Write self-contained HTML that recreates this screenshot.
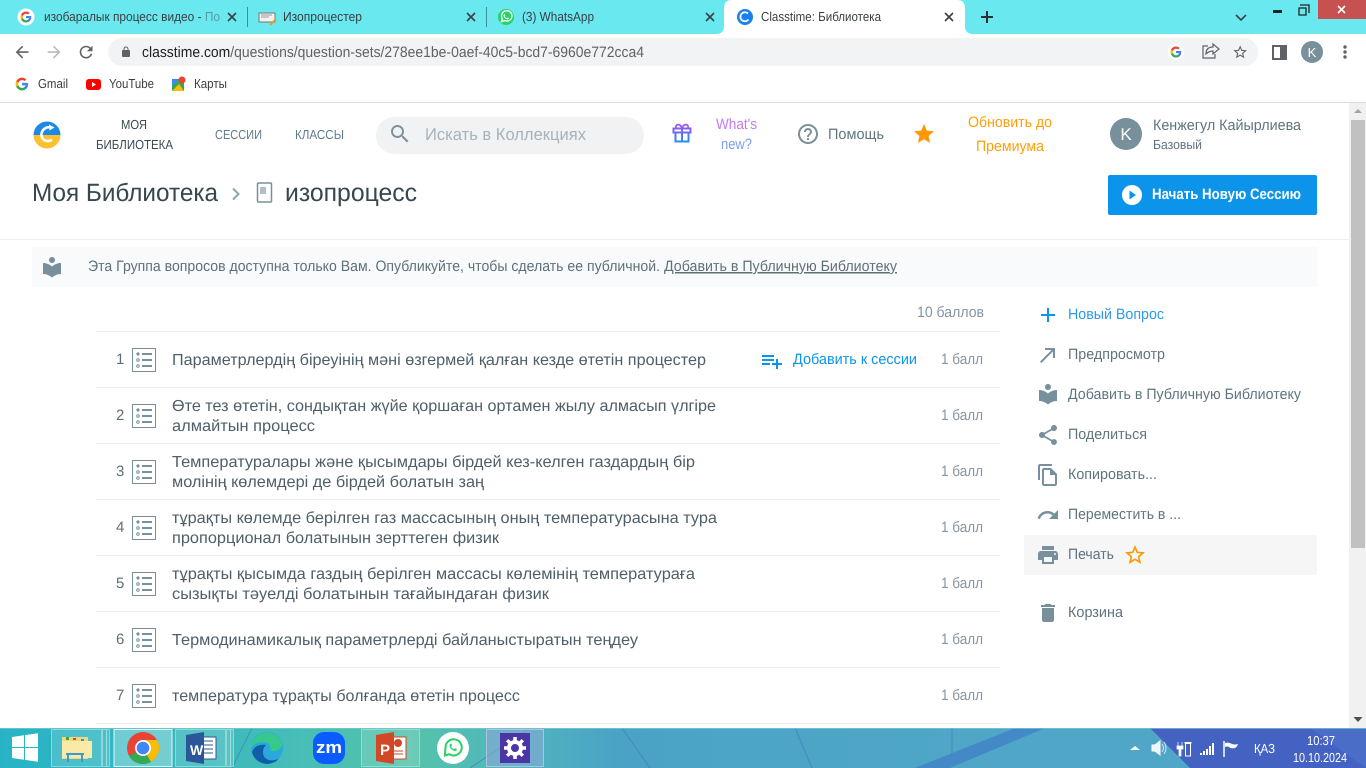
<!DOCTYPE html>
<html><head><meta charset="utf-8"><title>Classtime: Библиотека</title>
<style>
html,body{margin:0;padding:0;width:1366px;height:768px;overflow:hidden;background:#fff}
svg{display:block}
text{font-family:"Liberation Sans","DejaVu Sans","Noto Sans CJK SC",sans-serif;text-rendering:geometricPrecision}
.t{font-size:13px;fill:#3c4043}
.q{font-size:16px;fill:#4f5f69}
.n{font-size:15px;fill:#5f7079}
.p{font-size:15px;fill:#8494a0}
.s{font-size:15px;fill:#5f7480}
</style></head><body>
<svg width="1366" height="768" viewBox="0 0 1366 768" xmlns="http://www.w3.org/2000/svg">
<defs>
<linearGradient id="gift" gradientUnits="userSpaceOnUse" x1="0" y1="123" x2="0" y2="143"><stop offset="0" stop-color="#b04cf5"/><stop offset="1" stop-color="#1e90f5"/></linearGradient>
<linearGradient id="tb" x1="0" y1="0" x2="1" y2="0"><stop offset="0" stop-color="#27b3c6"/><stop offset=".2" stop-color="#43bcb9"/><stop offset=".3" stop-color="#55c3aa"/><stop offset=".38" stop-color="#50b5bd"/><stop offset=".45" stop-color="#4aa3c6"/><stop offset=".7" stop-color="#4fa6c6"/><stop offset="1" stop-color="#4fa6c6"/></linearGradient>
<symbol id="g" viewBox="0 0 24 24"><path fill="#4285F4" d="M22.56 12.25c0-.78-.07-1.53-.2-2.25H12v4.26h5.92c-.26 1.37-1.04 2.53-2.21 3.31v2.77h3.57c2.08-1.92 3.28-4.74 3.28-8.09z"/><path fill="#34A853" d="M12 23c2.97 0 5.46-.98 7.28-2.66l-3.57-2.77c-.98.66-2.23 1.06-3.71 1.06-2.86 0-5.29-1.93-6.16-4.53H2.18v2.84C3.99 20.53 7.7 23 12 23z"/><path fill="#FBBC05" d="M5.84 14.09c-.22-.66-.35-1.36-.35-2.09s.13-1.43.35-2.09V7.07H2.18C1.43 8.55 1 10.22 1 12s.43 3.45 1.18 4.93l2.85-2.22.81-.62z"/><path fill="#EA4335" d="M12 5.38c1.62 0 3.06.56 4.21 1.64l3.15-3.15C17.45 2.09 14.97 1 12 1 7.7 1 3.99 3.47 2.18 7.07l3.66 2.84c.87-2.6 3.3-4.53 6.16-4.53z"/></symbol>
<symbol id="lib" viewBox="0 0 24 24"><path d="M12 11.55C9.64 9.35 6.48 8 3 8v11c3.48 0 6.64 1.35 9 3.55 2.36-2.19 5.52-3.55 9-3.55V8c-3.48 0-6.64 1.35-9 3.55zM12 8c1.66 0 3-1.34 3-3s-1.34-3-3-3-3 1.34-3 3 1.34 3 3 3z"/></symbol>
<g id="qi" fill="none"><rect x=".5" y=".5" width="23" height="23" fill="#fff" stroke="#78909c"/><circle cx="6" cy="6" r="1.6" fill="#78909c"/><circle cx="6" cy="12" r="1.3" stroke="#78909c"/><circle cx="6" cy="18" r="1.3" stroke="#78909c"/><path d="M10 6h10M10 12h10M10 18h10" stroke="#78909c" stroke-width="2"/></g>
<g id="wa"><circle cx="0" cy="0" r="8" fill="#25d366"/><path d="M-4.6 4.7l.9-3.1a5.2 5.2 0 1 1 2 1.9z" fill="none" stroke="#fff" stroke-width="1.3"/><path d="M-2.2-2.4c.8-.9 1.2-.3 1.4.6.1.5-.7.8-.4 1.3.4.7 1 1.2 1.7 1.5.5.2.8-.7 1.3-.4.9.3 1.3.8.5 1.5-1.6 1.2-5.8-2.3-4.5-4.5z" fill="#fff"/></g>
</defs>

<!-- tab strip -->
<rect width="1366" height="34" fill="#6ae8ef"/>
<circle cx="26" cy="17" r="8.500" fill="#fff"/>
<use href="#g" x="20" y="11" width="12" height="12"/>
<text class="t" x="44" y="21" textLength="176" lengthAdjust="spacingAndGlyphs">изобаралык процесс видео - По</text>
<rect x="205" y="8" width="18" height="18" fill="#6ae8ef" opacity=".55"/>
<path d="M228 13l8 8M236 13l-8 8" stroke="#3c4043" stroke-width="1.6"/>
<rect x="247" y="7" width="1" height="20" fill="#3f8f96"/>
<g><rect x="259" y="13" width="16" height="9" fill="#f2f2f2" stroke="#777"/><path d="M261 15h11M261 17h8" stroke="#999"/><path d="M270 25l6-6" stroke="#d9a327" stroke-width="2"/></g>
<text class="t" x="283" y="21" textLength="79" lengthAdjust="spacingAndGlyphs">Изопроцестер</text>
<path d="M467 13l8 8M475 13l-8 8" stroke="#3c4043" stroke-width="1.6"/>
<rect x="486" y="7" width="1" height="20" fill="#3f8f96"/>
<use href="#wa" x="506" y="17"/>
<text class="t" x="522" y="21" textLength="72" lengthAdjust="spacingAndGlyphs">(3) WhatsApp</text>
<path d="M706 13l8 8M714 13l-8 8" stroke="#3c4043" stroke-width="1.6"/>
<path d="M716 34q8 0 8-8V8q0-8 8-8h225q8 0 8 8v18q0 8 8 8z" fill="#fff"/>
<circle cx="745" cy="17" r="8" fill="#1a7ff0"/>
<path d="M748 13.500a4.500 4.500 0 1 0 .5 6" fill="none" stroke="#fff" stroke-width="1.8"/>
<text class="t" x="761" y="21" textLength="120" lengthAdjust="spacingAndGlyphs">Classtime: Библиотека</text>
<path d="M945 13l8 8M953 13l-8 8" stroke="#3c4043" stroke-width="1.6"/>
<path d="M987 11v12M981 17h12" stroke="#2b2f33" stroke-width="2"/>
<path d="M1236 15l5 5 5-5" fill="none" stroke="#3c4043" stroke-width="1.6"/>
<rect x="1273" y="10" width="9" height="3" fill="#222"/>
<path d="M1300 5h9v8M1300 8h6v7h-7V8z" fill="none" stroke="#222" stroke-width="1.3"/>
<rect x="1318" width="48" height="19" fill="#c75050"/>
<path d="M1338 6l7 7M1345 6l-7 7" stroke="#fff" stroke-width="1.6"/>

<!-- toolbar -->
<g fill="#5f6368">
<path transform="translate(12.500 42.500) scale(.8)" d="M20 11H7.830l5.590-5.590L12 4l-8 8 8 8 1.410-1.410L7.830 13H20v-2z"/>
<path transform="translate(44.500 42.500) scale(.8)" fill="#b8bbbf" d="M4 11h12.170l-5.590-5.590L12 4l8 8-8 8-1.410-1.410L16.170 13H4v-2z"/>
<path transform="translate(76.500 42.500) scale(.8)" d="M17.650 6.350C16.200 4.900 14.210 4 12 4c-4.420 0-7.990 3.580-7.990 8s3.570 8 7.990 8c3.730 0 6.840-2.550 7.730-6h-2.080c-.82 2.330-3.040 4-5.650 4-3.310 0-6-2.690-6-6s2.690-6 6-6c1.660 0 3.140.69 4.220 1.780L13 11h7V4l-2.350 2.350z"/>
</g>
<rect x="108" y="38" width="1150" height="28" rx="14" fill="#f1f3f4"/>
<path transform="translate(120 46) scale(.5)" fill="#5f6368" d="M18 8h-1V6c0-2.760-2.240-5-5-5S7 3.240 7 6v2H6c-1.100 0-2 .9-2 2v10c0 1.100.9 2 2 2h12c1.100 0 2-.9 2-2V10c0-1.100-.9-2-2-2zM9 6c0-1.660 1.340-3 3-3s3 1.340 3 3v2H9V6z"/>
<text x="142" y="57" font-size="15" fill="#5f6368" textLength="502" lengthAdjust="spacingAndGlyphs"><tspan fill="#202124">classtime.com</tspan>/questions/question-sets/278ee1be-0aef-40c5-bcd7-6960e772cca4</text>
<circle cx="1176" cy="52" r="8" fill="#fff"/>
<use href="#g" x="1170" y="46" width="12" height="12"/>
<path d="M1207 46h-5v12h12v-4M1205 54c0-5 3-7 7-7v-3l6 5-6 5v-3c-3 0-5 1-7 3z" fill="none" stroke="#5f6368" stroke-width="1.2" transform="translate(1 0)"/>
<path transform="translate(1232 44) scale(.68)" fill="#5f6368" d="M22 9.240l-7.190-.62L12 2 9.190 8.630 2 9.240l5.460 4.730L5.820 21 12 17.270 18.180 21l-1.630-7.030L22 9.240zM12 15.400l-3.760 2.270 1-4.280-3.320-2.880 4.380-.38L12 6.100l1.710 4.040 4.380.38-3.320 2.880 1 4.280L12 15.400z"/>
<rect x="1273" y="46" width="13" height="13" fill="#fff" stroke="#5f6368" stroke-width="2"/>
<rect x="1280" y="46" width="6" height="13" fill="#5f6368"/>
<circle cx="1312" cy="52" r="11" fill="#78909c"/>
<text x="1312" y="57" font-size="13" fill="#fff" text-anchor="middle">K</text>
<g fill="#5f6368"><circle cx="1345" cy="47" r="1.7"/><circle cx="1345" cy="52" r="1.7"/><circle cx="1345" cy="57" r="1.7"/></g>

<!-- bookmarks -->
<use href="#g" x="15" y="77" width="14" height="14"/>
<text class="t" x="38" y="88" textLength="30" lengthAdjust="spacingAndGlyphs">Gmail</text>
<rect x="86" y="79" width="15" height="11" rx="3" fill="#f00"/><path d="M92 82l4 2.500-4 2.500z" fill="#fff"/>
<text class="t" x="109" y="88" textLength="45" lengthAdjust="spacingAndGlyphs">YouTube</text>
<g><path d="M172 79h12v12h-12z" fill="#34a853"/><path d="M172 91l7-7 5 7z" fill="#fbbc05"/><path d="M172 79h7l-7 7z" fill="#4285f4"/><circle cx="182" cy="80" r="3.500" fill="#ea4335"/></g>
<text class="t" x="194" y="88" textLength="33" lengthAdjust="spacingAndGlyphs">Карты</text>
<rect y="102" width="1366" height="1" fill="#dadce0"/>

<!-- app header -->
<path d="M33.500 135a13.500 13.500 0 0 1 27 0z" fill="#1e88e5"/>
<path d="M33.500 135a13.500 13.500 0 0 0 27 0z" fill="#fbc02d"/>
<path d="M51 127.500a7.500 7.500 0 0 0-9.500 6.500c-.5 5 4 8.500 9 6.500l1.500-1" fill="none" stroke="#fff" stroke-width="2.600"/>
<path d="M49 124.500l5.500 3-5 3z" fill="#fff"/>
<text x="134" y="129" font-size="13" fill="#3b4a52" text-anchor="middle" textLength="26" lengthAdjust="spacingAndGlyphs">МОЯ</text>
<text x="96" y="149" font-size="13" fill="#3b4a52" textLength="77" lengthAdjust="spacingAndGlyphs">БИБЛИОТЕКА</text>
<text x="215" y="139" font-size="13" fill="#607d8b" textLength="47" lengthAdjust="spacingAndGlyphs">СЕССИИ</text>
<text x="295" y="139" font-size="13" fill="#607d8b" textLength="49" lengthAdjust="spacingAndGlyphs">КЛАССЫ</text>
<rect x="376" y="117" width="268" height="37" rx="18.500" fill="#f0f2f4"/>
<path transform="translate(388 122)" fill="#7f919b" d="M15.500 14h-.79l-.28-.27C15.410 12.590 16 11.110 16 9.500 16 5.910 13.090 3 9.500 3S3 5.910 3 9.500 5.910 16 9.500 16c1.610 0 3.090-.59 4.230-1.570l.27.28v.79l5 4.990L20.490 19l-4.990-5zm-6 0C7.010 14 5 11.990 5 9.500S7.010 5 9.500 5 14 7.010 14 9.500 11.990 14 9.500 14z"/>
<text x="425" y="140" font-size="17" fill="#a9b3b9" textLength="161" lengthAdjust="spacingAndGlyphs">Искать в Коллекциях</text>
<g fill="none" stroke="url(#gift)" stroke-width="2"><rect x="673.500" y="128.500" width="17" height="4"/><path d="M675.500 132.500v9h13v-9M682 128.500v13"/><path d="M682 128c-2-5-7-4-6 0M682 128c2-5 7-4 6 0" stroke-width="1.700"/></g>
<text x="736.500" y="129" font-size="15" fill="#c27af5" text-anchor="middle" textLength="41" lengthAdjust="spacingAndGlyphs">What's</text>
<text x="736.500" y="149" font-size="15" fill="#7d9ff6" text-anchor="middle" textLength="31" lengthAdjust="spacingAndGlyphs">new?</text>
<path transform="translate(796 122)" fill="#78909c" d="M11 18h2v-2h-2v2zm1-16C6.480 2 2 6.480 2 12s4.480 10 10 10 10-4.480 10-10S17.520 2 12 2zm0 18c-4.410 0-8-3.590-8-8s3.590-8 8-8 8 3.590 8 8-3.590 8-8 8zm0-14c-2.210 0-4 1.790-4 4h2c0-1.100.9-2 2-2s2 .9 2 2c0 2-3 1.750-3 5h2c0-2.250 3-2.500 3-5 0-2.210-1.790-4-4-4z"/>
<text x="828" y="139" font-size="15" fill="#5f7480" textLength="56" lengthAdjust="spacingAndGlyphs">Помощь</text>
<path transform="translate(912 122)" fill="#ff9800" d="M12 17.270L18.180 21l-1.640-7.030L22 9.240l-7.190-.61L12 2 9.190 8.630 2 9.240l5.460 4.730L5.820 21z"/>
<text x="968" y="127" font-size="15" fill="#ff9f0a" textLength="84" lengthAdjust="spacingAndGlyphs">Обновить до</text>
<text x="976" y="151" font-size="15" fill="#ff9f0a" textLength="68" lengthAdjust="spacingAndGlyphs">Премиума</text>
<circle cx="1126" cy="134" r="16" fill="#78909c"/>
<text x="1126" y="140" font-size="17" fill="#fff" text-anchor="middle">K</text>
<text x="1153" y="130" font-size="15" fill="#5f7480" textLength="148" lengthAdjust="spacingAndGlyphs">Кенжегул Кайырлиева</text>
<text x="1153" y="149" font-size="13" fill="#5f7480" textLength="49" lengthAdjust="spacingAndGlyphs">Базовый</text>

<!-- heading -->
<text x="32" y="201" font-size="25" fill="#37474f" textLength="186" lengthAdjust="spacingAndGlyphs">Моя Библиотека</text>
<path d="M233 188.500l5.500 5.500-5.500 5.500" fill="none" stroke="#90a4ae" stroke-width="2"/>
<rect x="257.500" y="183" width="14" height="19" rx="1" fill="#fff" stroke="#78909c" stroke-width="1.500"/>
<rect x="260" y="187" width="6" height="7" fill="#b0bec5"/>
<text x="285" y="201" font-size="25" fill="#37474f" textLength="132" lengthAdjust="spacingAndGlyphs">изопроцесс</text>
<rect x="1108" y="175" width="209" height="40" rx="2" fill="#0b94ea"/>
<circle cx="1132" cy="195" r="10" fill="#fff"/><path d="M1129.500 190.500l6.500 4.500-6.500 4.500z" fill="#0b94ea"/>
<text x="1152" y="199" font-size="15" font-weight="700" fill="#fff" textLength="149" lengthAdjust="spacingAndGlyphs">Начать Новую Сессию</text>
<rect y="239" width="1350" height="1" fill="#eceeef"/>

<!-- notice -->
<rect x="32" y="247" width="1285" height="40" fill="#f9fafc"/>
<use href="#lib" x="40" y="255" width="24" height="24" fill="#78909c"/>
<text class="n" x="88" y="271" textLength="572" lengthAdjust="spacingAndGlyphs">Эта Группа вопросов доступна только Вам. Опубликуйте, чтобы сделать ее публичной.</text>
<text class="n" x="664" y="271" textLength="233" lengthAdjust="spacingAndGlyphs" text-decoration="underline">Добавить в Публичную Библиотеку</text>

<!-- list -->
<text class="p" x="917" y="317" textLength="67" lengthAdjust="spacingAndGlyphs">10 баллов</text>
<g fill="#eef0f1">
<rect x="96" y="331" width="904" height="1"/><rect x="96" y="387" width="904" height="1"/><rect x="96" y="443" width="904" height="1"/><rect x="96" y="499" width="904" height="1"/><rect x="96" y="555" width="904" height="1"/><rect x="96" y="611" width="904" height="1"/><rect x="96" y="667" width="904" height="1"/><rect x="96" y="723" width="904" height="1"/>
</g>
<g font-size="15" fill="#5f7079">
<text x="116" y="364">1</text><text x="116" y="420">2</text><text x="116" y="476">3</text><text x="116" y="532">4</text><text x="116" y="588">5</text><text x="116" y="644">6</text><text x="116" y="700">7</text>
</g>
<use href="#qi" x="132" y="348"/><use href="#qi" x="132" y="404"/><use href="#qi" x="132" y="460"/><use href="#qi" x="132" y="516"/><use href="#qi" x="132" y="572"/><use href="#qi" x="132" y="628"/><use href="#qi" x="132" y="684"/>

<text class="q" x="172" y="365" textLength="534" lengthAdjust="spacingAndGlyphs">Параметрлердің біреуінің мәні өзгермей қалған кезде өтетін процестер</text>
<text class="q" x="172" y="411" textLength="544" lengthAdjust="spacingAndGlyphs">Өте тез өтетін, сондықтан жүйе қоршаған ортамен жылу алмасып үлгіре</text>
<text class="q" x="172" y="431" textLength="143" lengthAdjust="spacingAndGlyphs">алмайтын процесс</text>
<text class="q" x="172" y="467" textLength="523" lengthAdjust="spacingAndGlyphs">Температуралары және қысымдары бірдей кез-келген газдардың бір</text>
<text class="q" x="172" y="487" textLength="312" lengthAdjust="spacingAndGlyphs">молінің көлемдері де бірдей болатын заң</text>
<text class="q" x="172" y="523" textLength="545" lengthAdjust="spacingAndGlyphs">тұрақты көлемде берілген газ массасының оның температурасына тура</text>
<text class="q" x="172" y="543" textLength="327" lengthAdjust="spacingAndGlyphs">пропорционал болатынын зерттеген физик</text>
<text class="q" x="172" y="579" textLength="523" lengthAdjust="spacingAndGlyphs">тұрақты қысымда газдың берілген массасы көлемінің температураға</text>
<text class="q" x="172" y="599" textLength="377" lengthAdjust="spacingAndGlyphs">сызықты тәуелді болатынын тағайындаған физик</text>
<text class="q" x="172" y="645" textLength="466" lengthAdjust="spacingAndGlyphs">Термодинамикалық параметрлерді байланыстыратын теңдеу</text>
<text class="q" x="172" y="701" textLength="348" lengthAdjust="spacingAndGlyphs">температура тұрақты болғанда өтетін процесс</text>

<path transform="translate(760 349)" fill="#0b94ea" d="M14 10H2v2h12v-2zm0-4H2v2h12V6zm4 8v-4h-2v4h-4v2h4v4h2v-4h4v-2h-4zM2 16h8v-2H2v2z"/>
<text x="793" y="364" font-size="15" fill="#0b94ea" textLength="124" lengthAdjust="spacingAndGlyphs">Добавить к сессии</text>
<g>
<text class="p" x="941" y="364" textLength="42" lengthAdjust="spacingAndGlyphs">1 балл</text>
<text class="p" x="941" y="420" textLength="42" lengthAdjust="spacingAndGlyphs">1 балл</text>
<text class="p" x="941" y="476" textLength="42" lengthAdjust="spacingAndGlyphs">1 балл</text>
<text class="p" x="941" y="532" textLength="42" lengthAdjust="spacingAndGlyphs">1 балл</text>
<text class="p" x="941" y="588" textLength="42" lengthAdjust="spacingAndGlyphs">1 балл</text>
<text class="p" x="941" y="644" textLength="42" lengthAdjust="spacingAndGlyphs">1 балл</text>
<text class="p" x="941" y="700" textLength="42" lengthAdjust="spacingAndGlyphs">1 балл</text>
</g>

<!-- sidebar -->
<rect x="1024" y="535" width="293" height="40" rx="2" fill="#f6f6f6"/>
<path transform="translate(1036 303)" fill="#0b94ea" d="M19 13h-6v6h-2v-6H5v-2h6V5h2v6h6v2z"/>
<text x="1068" y="319" font-size="15" fill="#2a9bec" textLength="96" lengthAdjust="spacingAndGlyphs">Новый Вопрос</text>
<g fill="#78909c">
<path transform="translate(1036 343)" d="M9 5v2h6.590L4 18.590 5.410 20 17 8.410V15h2V5z"/>
<use href="#lib" x="1036" y="382" width="24" height="24"/>
<path transform="translate(1036 423)" d="M18 16.080c-.76 0-1.440.3-1.960.77L8.910 12.700c.05-.23.09-.46.09-.7s-.04-.47-.09-.7l7.050-4.110c.54.5 1.250.81 2.040.81 1.660 0 3-1.340 3-3s-1.340-3-3-3-3 1.340-3 3c0 .24.04.47.09.7L8.040 9.810C7.500 9.310 6.790 9 6 9c-1.660 0-3 1.340-3 3s1.340 3 3 3c.79 0 1.500-.31 2.040-.81l7.120 4.160c-.05.21-.08.43-.08.65 0 1.610 1.310 2.920 2.920 2.920 1.610 0 2.920-1.310 2.920-2.920s-1.310-2.920-2.920-2.920z"/>
<path transform="translate(1036 463)" d="M16 1H4c-1.100 0-2 .9-2 2v14h2V3h12V1zm-1 4H8c-1.100 0-1.990.9-1.990 2L6 21c0 1.100.89 2 1.990 2H19c1.100 0 2-.9 2-2V11l-6-6zM8 21V7h6v5h5v9H8z"/>
<path transform="translate(1036 503)" d="M18.400 10.600C16.550 8.990 14.150 8 11.500 8c-4.650 0-8.580 3.030-9.960 7.220L3.900 16c1.050-3.190 4.050-5.500 7.600-5.500 1.950 0 3.730.72 5.120 1.880L13 16h9V7l-3.600 3.600z"/>
<path transform="translate(1036 543)" d="M19 8H5c-1.660 0-3 1.340-3 3v6h4v4h12v-4h4v-6c0-1.660-1.340-3-3-3zm-3 11H8v-5h8v5zm3-7c-.55 0-1-.45-1-1s.45-1 1-1 1 .45 1 1-.45 1-1 1zm-1-9H6v4h12V3z"/>
<path transform="translate(1036 601)" d="M6 19c0 1.100.9 2 2 2h8c1.100 0 2-.9 2-2V7H6v12zM19 4h-3.500l-1-1h-5l-1 1H5v2h14V4z"/>
</g>
<text class="s" x="1068" y="359" textLength="97" lengthAdjust="spacingAndGlyphs">Предпросмотр</text>
<text class="s" x="1068" y="399" textLength="233" lengthAdjust="spacingAndGlyphs">Добавить в Публичную Библиотеку</text>
<text class="s" x="1068" y="439" textLength="79" lengthAdjust="spacingAndGlyphs">Поделиться</text>
<text class="s" x="1068" y="479" textLength="89" lengthAdjust="spacingAndGlyphs">Копировать...</text>
<text class="s" x="1068" y="519" textLength="113" lengthAdjust="spacingAndGlyphs">Переместить в ...</text>
<text class="s" x="1068" y="559" textLength="46" lengthAdjust="spacingAndGlyphs">Печать</text>
<path transform="translate(1123 543)" fill="#ff9800" d="M22 9.240l-7.190-.62L12 2 9.190 8.630 2 9.240l5.460 4.730L5.820 21 12 17.270 18.180 21l-1.630-7.030L22 9.240zM12 15.400l-3.760 2.270 1-4.280-3.320-2.880 4.380-.38L12 6.100l1.710 4.040 4.380.38-3.320 2.880 1 4.280L12 15.400z"/>
<text class="s" x="1068" y="617" textLength="55" lengthAdjust="spacingAndGlyphs">Корзина</text>

<!-- scrollbar -->
<rect x="1349" y="103" width="17" height="625" fill="#f1f1f1"/>
<rect x="1351" y="120" width="14" height="428" fill="#c1c1c1"/>
<path d="M1358 109l4 4h-8z" fill="#a3a3a3"/>
<path d="M1353.500 717h9l-4.500 5z" fill="#505050"/>

<!-- taskbar -->
<rect y="728" width="1366" height="40" fill="url(#tb)"/>
<path d="M1015 728h30l-95 40h-35z" fill="#3f7fc8" opacity=".75"/>
<path d="M1150 728h216v40h-176z" fill="#4462c2"/>
<path d="M1310 728h56v40z" fill="#4f74cc" opacity=".6"/>
<path d="M232 768l20-40M470 768l60-40M622 728l28 40M795 728l17 40M952 728v27" stroke="#3c7fbd" stroke-width="1" fill="none" opacity=".7"/>
<rect y="728" width="1366" height="1" fill="#7fc8d8" opacity=".7"/>
<g fill="#fff"><path d="M12 737l12-1.700V747H12z"/><path d="M25 735.100l13-1.900V747H25z"/><path d="M12 748h12v11.700L12 758z"/><path d="M25 748h13v13.800l-13-1.900z"/></g>
<g fill="#fff" fill-opacity=".14" stroke="#a5e0df" stroke-opacity=".75">
<rect x="51.500" y="729.500" width="50" height="37"/><rect x="102.500" y="729.500" width="4" height="37"/><rect x="106.500" y="729.500" width="3" height="37"/>
<rect x="175.500" y="729.500" width="50" height="37"/><rect x="226.500" y="729.500" width="4" height="37"/><rect x="230.500" y="729.500" width="3" height="37"/>
<rect x="361.500" y="729.500" width="58" height="37"/>
</g>
<rect x="114" y="729.500" width="58" height="37" fill="#fff" fill-opacity=".3" stroke="#e5f7f5"/>
<rect x="486.500" y="729.500" width="57" height="37" fill="#8fa8d8" fill-opacity=".55" stroke="#a9c5e0"/>
<!-- explorer -->
<path d="M62 737h26v22H62z" fill="#f5d67a"/><path d="M62 741h30v17H62z" fill="#fbe9a8"/><rect x="66" y="737" width="3" height="3" fill="#3fa648"/><rect x="73" y="738" width="3" height="2" fill="#d9433b"/><rect x="81" y="739" width="3" height="2" fill="#3b8fd9"/><path d="M68 762v-8h14v8M66 754h18" stroke="#3d9ad1" stroke-width="2" fill="none"/>
<!-- chrome -->
<circle cx="143" cy="748" r="16" fill="#ea4335"/>
<path d="M143 748l-13.900 8a16 16 0 0 0 21.900 5.900z" fill="#34a853"/>
<path d="M143 748l8 13.900a16 16 0 0 0 5.900-21.900H143z" fill="#fbbc05"/>
<circle cx="143" cy="748" r="8" fill="#fff"/><circle cx="143" cy="748" r="6.300" fill="#4285f4"/>
<!-- word -->
<rect x="198" y="737" width="18" height="22" fill="#fff" stroke="#2b579a"/><path d="M201 741h12M201 745h12M201 749h12M201 753h12" stroke="#2b579a"/>
<path d="M186 735l18-3v32l-18-3z" fill="#2b579a"/>
<text x="190" y="755" font-size="14" font-weight="700" fill="#fff">W</text>
<!-- edge -->
<circle cx="267" cy="748" r="16" fill="#2aa7dc"/>
<path d="M251 748a16 16 0 0 1 31-5c1 6-5 9-11 8-1-3 0-6-4-8-7-2-13 0-16 5z" fill="#36c98e"/>
<path d="M252 752c2 9 12 14 20 11 3-1 5-2 6-4-7 3-15 1-15-7 0-3 1-5 3-7-6-1-12 1-14 7z" fill="#0f5fa8"/>
<!-- zoom -->
<rect x="313" y="732" width="32" height="32" rx="11" fill="#0b5cff"/>
<text x="329" y="753" font-size="17" font-weight="700" fill="#fff" text-anchor="middle" textLength="26" lengthAdjust="spacingAndGlyphs">zm</text>
<!-- ppt -->
<rect x="391" y="737" width="15" height="22" fill="#fff" stroke="#d24726"/><circle cx="398" cy="743" r="4" fill="#d24726"/><path d="M394 751h9M394 754h9" stroke="#d24726"/>
<path d="M376 735l18-3v32l-18-3z" fill="#d24726"/>
<text x="380" y="755" font-size="15" font-weight="700" fill="#fff">P</text>
<!-- whatsapp -->
<circle cx="453" cy="748" r="16" fill="#fff"/>
<g transform="translate(453 748) scale(1.250)"><circle r="8" fill="#fff"/><path d="M-6-0.500a6.500 6.500 0 1 1 3 5.500l-3.500 1z" fill="#fff" stroke="#25d366" stroke-width="1.600"/><path d="M-2.500-3c1-1 1.300-.3 1.600.7.100.5-.7.900-.4 1.400.4.800 1.100 1.400 1.900 1.700.5.200.9-.8 1.400-.5 1 .4 1.500.9.600 1.700-1.800 1.400-6.500-2.500-5.100-5z" fill="#25d366"/></g>
<!-- settings -->
<rect x="500" y="733" width="30" height="30" fill="#4a36a4"/>
<g transform="translate(515 748)"><circle r="6" fill="none" stroke="#fff" stroke-width="4"/><g stroke="#fff" stroke-width="3.500"><path d="M0-11v4M0 7v4M-11 0h4M7 0h4M-7.800-7.800l2.800 2.800M5 5l2.800 2.800M-7.800 7.800l2.800-2.800M5-5l2.800-2.800"/></g></g>
<!-- tray -->
<path d="M1130 750l5-4 5 4z" fill="#fff"/>
<path d="M1152 745h3l5-4v14l-5-4h-3z" fill="#fff" fill-opacity=".9" stroke="#fff"/><path d="M1162 744q3 4 0 8M1164 742q4 6 0 12" fill="none" stroke="#d9e0f2" stroke-width="1"/>
<path d="M1178 742v4M1182 742v4M1177 746h6v3h-2v7h-2v-7h-2z" fill="#fff" stroke="#fff" stroke-width=".7"/>
<rect x="1185.500" y="743.500" width="5" height="12.500" fill="none" stroke="#fff"/><rect x="1184.500" y="742" width="7" height="1.500" fill="#fff"/>
<g fill="#fff"><rect x="1200" y="753" width="2" height="2"/><rect x="1203" y="751" width="2" height="4"/><rect x="1206" y="749" width="2" height="6"/><rect x="1209" y="746" width="2" height="9"/><rect x="1212" y="743" width="2" height="12"/></g>
<path d="M1224 741v16" stroke="#fff" stroke-width="1.500"/><path d="M1225 743q4-1 7 1 3 1 6 0-1 3-3 4-4 1-6-1-2-1-4 0z" fill="#fff"/>
<text x="1254" y="753" font-size="13" fill="#fff" textLength="21" lengthAdjust="spacingAndGlyphs">ҚАЗ</text>
<text x="1321" y="745" font-size="13" fill="#fff" text-anchor="middle" textLength="28" lengthAdjust="spacingAndGlyphs">10:37</text>
<text x="1320" y="762" font-size="13" fill="#fff" text-anchor="middle" textLength="54" lengthAdjust="spacingAndGlyphs">10.10.2024</text>
</svg>
</body></html>
